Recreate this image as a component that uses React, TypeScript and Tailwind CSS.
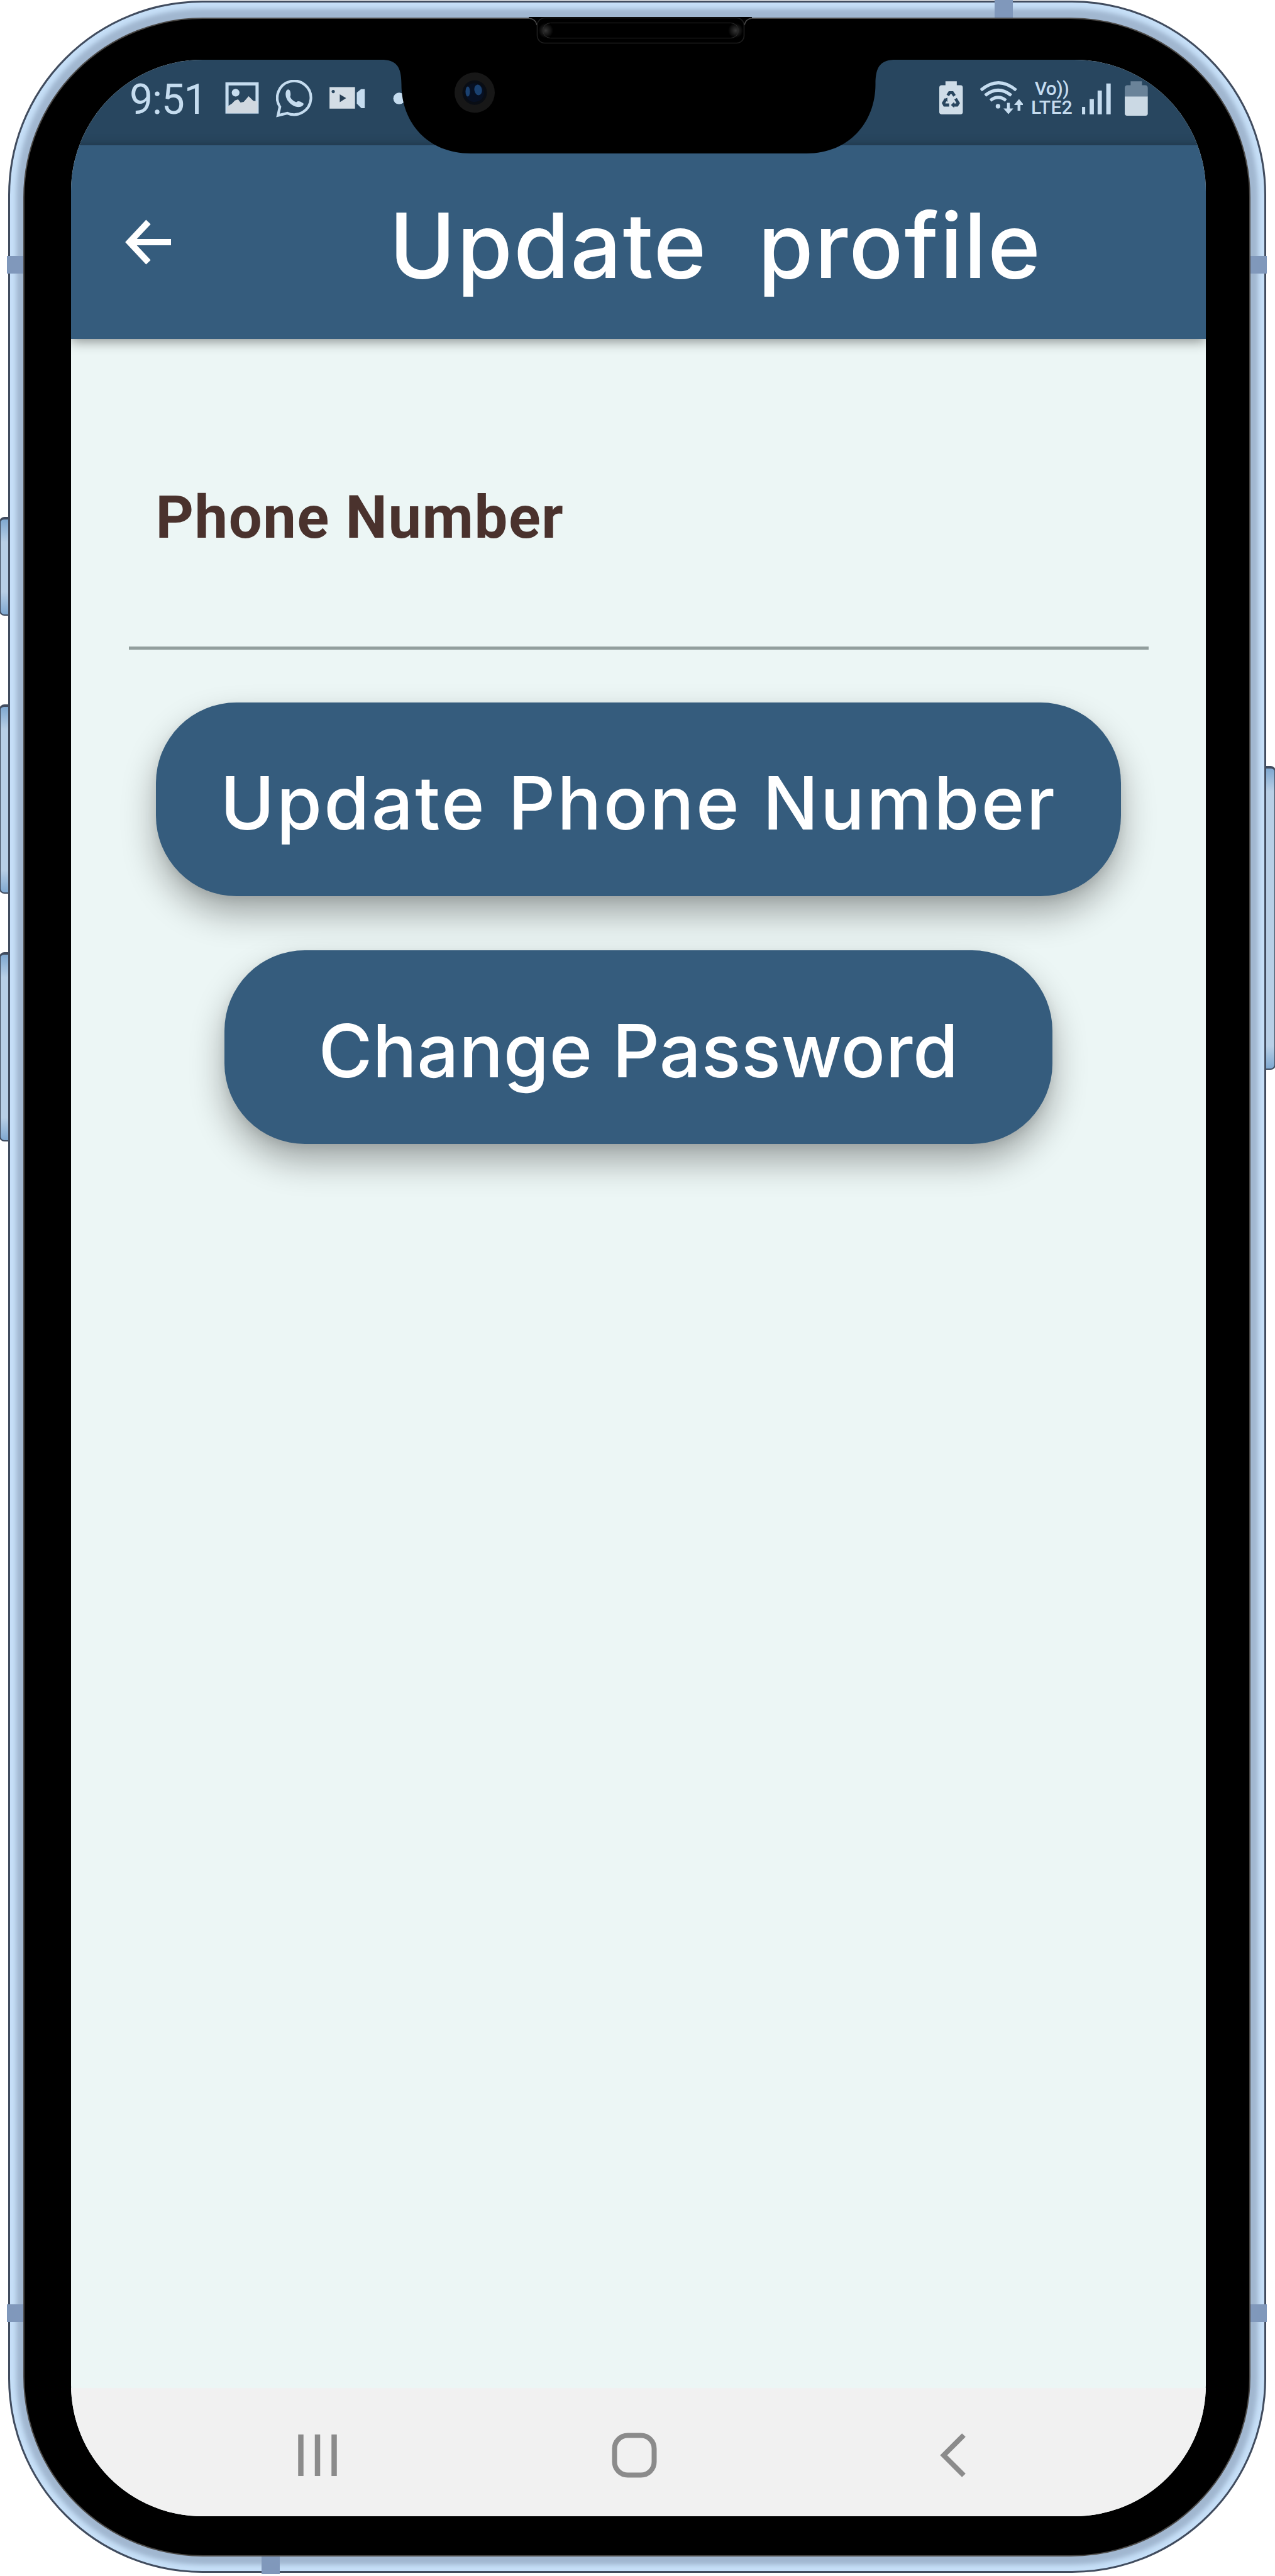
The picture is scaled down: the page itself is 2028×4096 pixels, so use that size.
import React from "react";

/* Antenna strip that crosses the metal rim. */
function Band({ className }: { className: string }) {
  return <div className={`absolute bg-[#8098bb] ${className}`} />;
}

function SideButton({ className }: { className: string }) {
  return (
    <div
      className={`w-[24px] shrink-0 border-2 border-t-[4px] border-[#414c5e] bg-[linear-gradient(to_bottom,#7fa8d0_0,#b8cfe6_36px,#b8cfe6_calc(100%-36px),#7fa8d0_100%)] ${className}`}
    />
  );
}

/* Notch with earpiece and front camera. */
function Notch() {
  return (
    <svg className="absolute top-[-10px] left-[561px] z-20" width="830" height="230" viewBox="600 20 830 230" fill="none">
      <defs>
        <radialGradient id="glow">
          <stop offset="0" stopColor="#363636" />
          <stop offset="1" stopColor="#000" />
        </radialGradient>
      </defs>
      <path
        d="M606 94V95C630 95 638.5 105 638.5 134C638.5 195 680 244 749 244H1283C1350 244 1392.5 195 1392.5 134C1392.5 105 1401 95 1425 95V94Z"
        fill="#000"
      />
      <rect x="841" y="27" width="355" height="5" fill="#000" />
      <path d="M841 29Q852 30 854 40M1196 29Q1186 30 1184 40" stroke="#4d4d4d" strokeWidth="1.5" />
      <rect x="854.5" y="28.5" width="329" height="40" rx="12" stroke="#1e1e1e" strokeWidth="1.6" />
      <circle cx="868" cy="48.5" r="12" fill="url(#glow)" />
      <circle cx="1170" cy="48.5" r="12" fill="url(#glow)" />
      <rect x="863.5" y="36.5" width="311" height="24" rx="12" stroke="#2b2b2b" />
      <circle cx="755" cy="147.3" r="32" fill="#171717" />
      <circle cx="755" cy="147.3" r="19.5" fill="#090d14" />
      <circle cx="755" cy="147.3" r="15" fill="#071022" />
      <ellipse cx="744" cy="145.5" rx="3.5" ry="8" fill="#1a4170" />
      <ellipse cx="760.5" cy="143" rx="6" ry="8.5" fill="#1a4170" transform="rotate(-10 760.5 143)" />
    </svg>
  );
}

function StatusBar() {
  return (
    <div className="flex h-[136px] shrink-0 items-start bg-[#28465f] pt-[32px] pr-[92px] pl-[93px] text-[#c5dcef]">
      <span className="-mt-px w-[152px] font-[Roboto,sans-serif] text-[66px] leading-[66px] tracking-[-1.2px]">9:51</span>
      <div className="flex">
        <svg width="54" height="60" viewBox="72 62 193 213" fill="none">
          <rect x="83" y="84" width="171" height="160" stroke="#c5dcef" strokeWidth="18" />
          <path d="M82 250V215L112 195L128 178L146 172L160 190L178 186L206 154L232 180L256 184V250Z" fill="#d0d8e0" />
          <circle cx="132" cy="134" r="22" fill="#c5dcef" />
        </svg>
        <svg className="ml-[27px]" width="60" height="60" viewBox="360 62 213 213" fill="none">
          <path d="M371 263L382 214A95 95 0 1 1 424 250Z" stroke="#c5dcef" strokeWidth="15" />
          <path
            d="M418 124C426 110 438 116 441 130C444 146 442 152 440 158C446 172 458 182 474 188C484 178 496 182 514 194C520 202 508 212 494 215C470 218 444 204 430 184C416 166 410 142 418 124Z"
            fill="#c5dcef"
          />
        </svg>
        <svg className="ml-[24px]" width="58" height="60" viewBox="660 62 206 213" fill="none">
          <path d="M664 103H808V224H664Z" fill="#d3dde5" />
          <path d="M818 134L842 114H863V222H844L818 196Z" fill="#c5dcef" />
          <path d="M722 144L758 165L722 188Z" fill="#263f55" />
          <circle cx="685" cy="128" r="9" fill="#28465f" />
        </svg>
        <svg className="ml-[44px]" width="20" height="60" viewBox="1025 62 71 213">
          <circle cx="1060" cy="167" r="33" fill="#c5dcef" />
        </svg>
      </div>
      <div className="ml-auto flex">
        <svg width="38" height="60" viewBox="68 62 135 213" fill="none">
          <path d="M103 70H167V92H188Q201 92 201 106V244Q201 256 188 256H82Q68 256 68 244V106Q68 92 82 92H103Z" fill="#cfdde8" />
          <path
            d="M116 150L126 134H142L154 152M160 168L175 193L168 204H144M124 204H98L92 193L106 170"
            stroke="#28465f"
            strokeWidth="17"
          />
          <path d="M152 186V220L134 204ZM92 172L114 162V186Z" fill="#28465f" />
        </svg>
        <svg className="ml-[27px]" width="68" height="60" viewBox="298 62 242 213" fill="none" stroke="#c5dcef" strokeWidth="18">
          <path d="M302 120Q401 36 502 120M326 150Q400 90 474 150M356 178Q400 144 444 178" />
          <circle cx="399" cy="211" r="13" fill="#c5dcef" stroke="none" />
          <path d="M458 192V236M518 190V236" strokeWidth="16" />
          <path d="M430 224H486L458 256ZM490 204H546L518 170Z" fill="#c5dcef" stroke="none" />
        </svg>
        <div className="ml-[12px] flex h-[60px] w-[68px] flex-col items-center font-[Roboto,sans-serif] text-[30px] leading-[30px] font-medium">
          <span className="-mt-px tracking-[-0.5px] whitespace-nowrap">Vo))</span>
          <span className="tracking-[0.3px] whitespace-nowrap">LTE2</span>
        </div>
        <svg className="ml-[14px]" width="46" height="60" viewBox="875 62 163 213" fill="#c5dcef">
          <path d="M875 215H893V256H875ZM918 170H942V256H918ZM963 122H987V256H963ZM1012 82H1037V256H1012Z" />
        </svg>
        <svg className="ml-[22px]" width="37" height="60" viewBox="1115 62 131 213">
          <path d="M1148 70H1212V92H1230Q1245 92 1245 108V158H1115V108Q1115 92 1130 92H1148Z" fill="#6a8399" />
          <path d="M1115 156H1245V252Q1245 264 1232 264H1128Q1115 264 1115 252Z" fill="#cbd9e4" />
        </svg>
      </div>
    </div>
  );
}

function ActionButton({ className, children }: { className: string; children: React.ReactNode }) {
  return (
    <button
      className={`h-[308px] shrink-0 rounded-[128px] bg-[#355c7d] pt-[12px] text-[117px] font-medium text-white shadow-[0_28px_54px_rgba(0,0,0,0.32),0_6px_16px_rgba(0,0,0,0.08)] ${className}`}
    >
      {children}
    </button>
  );
}

export default function App() {
  return (
    <div className="flex h-[4096px] w-[2028px] overflow-hidden bg-white pt-px font-[Inter,sans-serif]">
      <div className="flex w-[13px] shrink-0 flex-col pt-[821px]">
        <SideButton className="-ml-px h-[157px] rounded-l-[8px]" />
        <SideButton className="-ml-px mt-[141px] h-[301px] rounded-l-[8px]" />
        <SideButton className="-ml-px mt-[93px] h-[301px] rounded-l-[8px]" />
      </div>

      <div className="relative z-10 h-[4090px] w-[2001px] shrink-0 rounded-[309px] border-[3px] border-[#414c5e] bg-[#a1b7d0] pt-[24px] pr-[22px] pb-[23px] pl-[21px] shadow-[inset_0_0_7px_10px_#c6dff7]">
        <Band className="top-[403px] left-[-5px] h-[28px] w-[28px]" />
        <Band className="top-[403px] right-[-4px] h-[28px] w-[28px]" />
        <Band className="top-[3660px] left-[-5px] h-[28px] w-[28px]" />
        <Band className="top-[3660px] right-[-4px] h-[28px] w-[28px]" />
        <Band className="top-[-4px] left-[1566px] h-[30px] w-[29px]" />
        <Band className="bottom-[-5px] left-[400px] h-[32px] w-[29px]" />

        <div className="relative h-full rounded-[286px] border-2 border-[#4a4846] bg-black pt-[65px] pr-[69px] pb-[62px] pl-[74px]">
          <main className="flex h-full flex-col overflow-hidden rounded-[209px] bg-[#ecf6f5]">
            <StatusBar />
            <header className="relative z-10 flex h-[308px] shrink-0 items-start bg-[#355c7d] pl-[86px] text-white shadow-[0_4px_18px_rgba(0,0,0,0.42)]">
              <svg className="mt-[118px] shrink-0" width="73" height="72" viewBox="0 0 73 72" fill="none" stroke="currentColor" strokeWidth="10">
                <path d="M73 36H10M37 4L7 36L37 68" />
              </svg>
              <h1 className="mt-[72px] ml-[347px] text-[143px] leading-[173px] font-medium tracking-[1.9px] whitespace-pre">Update  profile</h1>
            </header>
            <section className="flex grow flex-col items-center">
              <div className="h-[494px] w-[1622px] shrink-0 border-b-[5px] border-[#929e9d] pt-[229px] pl-[43px]">
                <label className="block font-[Roboto,sans-serif] text-[94px] leading-[110px] font-bold tracking-[1.5px] text-[#4a322d]">
                  Phone Number
                </label>
              </div>
              <ActionButton className="mt-[84px] w-[1535px] tracking-[3.1px]">Update Phone Number</ActionButton>
              <ActionButton className="mt-[86px] w-[1317px] tracking-[0.3px]">Change Password</ActionButton>
            </section>
            <nav className="flex h-[204px] shrink-0 items-start bg-[#f1f1f1] pt-[71px] pl-[361px]">
              <svg width="62" height="72" viewBox="0 0 62 72" fill="none" stroke="#8b8b8b" strokeWidth="8.5">
                <path d="M4.5 3V69M31 3V69M57.5 3V69" />
              </svg>
              <svg className="ml-[437px]" width="72" height="72" viewBox="0 0 72 72" fill="none" stroke="#8b8b8b" strokeWidth="8">
                <rect x="4.5" y="4.5" width="63" height="63" rx="21" />
              </svg>
              <svg className="ml-[448px]" width="46" height="72" viewBox="0 0 46 72" fill="none" stroke="#8b8b8b" strokeWidth="8">
                <path d="M40 4L8 36L40 68" />
              </svg>
            </nav>
          </main>
          <Notch />
        </div>
      </div>

      <div className="flex w-[14px] shrink-0 flex-col items-end pt-[1217px]">
        <SideButton className="-mr-px h-[483px] rounded-r-[8px]" />
      </div>
    </div>
  );
}
